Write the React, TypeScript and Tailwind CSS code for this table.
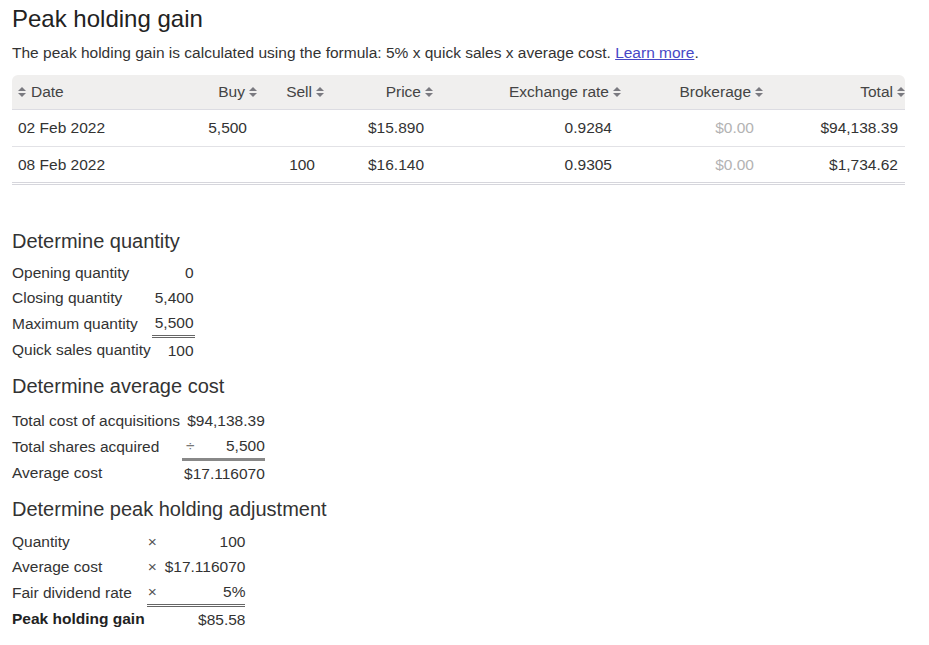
import React from 'react';

const SortIcon = () => (
    <svg width="8" height="12" viewBox="0 0 8 12" className="inline-block shrink-0">
        <path d="M0 5 L4 1 L8 5 Z" fill="#7a7a80" />
        <path d="M0 7 L4 11 L8 7 Z" fill="#7a7a80" />
    </svg>
);

const cols = 'grid grid-cols-[176px_69px_67px_109px_188px_142px_142px]';

const headers = ['Buy', 'Sell', 'Price', 'Exchange rate', 'Brokerage', 'Total'];

const rows = [
    { date: '02 Feb 2022', buy: '5,500', sell: '', price: '$15.890', rate: '0.9284', brokerage: '$0.00', total: '$94,138.39' },
    { date: '08 Feb 2022', buy: '', sell: '100', price: '$16.140', rate: '0.9305', brokerage: '$0.00', total: '$1,734.62' },
];

export default function App() {
    return (
        <div className="min-h-screen bg-white px-3 text-[15.5px] text-[#333] font-['Liberation_Sans',Arial,sans-serif]">
            <h1 className="pt-[4px] text-[24px] leading-[30px] text-[#222]">Peak holding gain</h1>
            <p className="mt-[9px] leading-[20px] text-[#333]">
                The peak holding gain is calculated using the formula: 5% x quick sales x average cost.{' '}
                <a href="#" className="text-[#4747c6] underline">Learn more</a>.
            </p>

            {/* trades table */}
            <div className="mt-[12px] w-[893px]">
                <div className={`${cols} h-[35px] items-center rounded-t-[6px] border-b border-[#dcdce2] bg-[#f0efee] text-[#444]`}>
                    <div className="flex items-center gap-[5px] pl-[6px]">
                        <SortIcon />
                        <span>Date</span>
                    </div>
                    {headers.map((h) => (
                        <div key={h} className="flex items-center justify-end gap-[4px]">
                            <span>{h}</span>
                            <SortIcon />
                        </div>
                    ))}
                </div>
                {rows.map((r, i) => (
                    <div
                        key={r.date}
                        className={`${cols} items-center ${i === rows.length - 1 ? 'h-[38px] border-b-[3px] border-double border-[#d6d6dc]' : 'h-[37px] border-b border-[#e2e2e6]'}`}
                    >
                        <div className="pl-[6px]">{r.date}</div>
                        <div className="pr-[10px] text-right">{r.buy}</div>
                        <div className="pr-[9px] text-right">{r.sell}</div>
                        <div className="pr-[9px] text-right">{r.price}</div>
                        <div className="pr-[9px] text-right">{r.rate}</div>
                        <div className="pr-[9px] text-right text-[#b3b3b3]">{r.brokerage}</div>
                        <div className="pr-[7px] text-right">{r.total}</div>
                    </div>
                ))}
            </div>

            {/* quantity */}
            <h2 className="mt-[44px] text-[20px] leading-[24px]">Determine quantity</h2>
            <table className="mt-[7px] leading-[25px]">
                <tbody>
                    <tr>
                        <td className="pr-[1px]">Opening quantity</td>
                        <td className="pl-[3px] pr-[1px] text-right">0</td>
                    </tr>
                    <tr>
                        <td className="pr-[1px]">Closing quantity</td>
                        <td className="pl-[3px] pr-[1px] text-right">5,400</td>
                    </tr>
                    <tr>
                        <td className="pr-[1px]">Maximum quantity</td>
                        <td className="border-b-[3px] border-double border-[#666] pl-[3px] pr-[1px] text-right">5,500</td>
                    </tr>
                    <tr>
                        <td className="pr-[1px]">Quick sales quantity</td>
                        <td className="pl-[3px] pr-[1px] text-right">100</td>
                    </tr>
                </tbody>
            </table>

            {/* average cost */}
            <h2 className="mt-[11px] text-[20px] leading-[24px]">Determine average cost</h2>
            <table className="mt-[10px] leading-[25px]">
                <tbody>
                    <tr>
                        <td className="pr-[2px]">Total cost of acquisitions</td>
                        <td className="pl-[4px] text-right">$94,138.39</td>
                    </tr>
                    <tr>
                        <td className="pr-[2px]">Total shares acquired</td>
                        <td className="border-b-[3px] border-[#888] pl-[2px]">
                            <div className="flex justify-between">
                                <span className="pl-[2px] text-[#777]">÷</span>
                                <span>5,500</span>
                            </div>
                        </td>
                    </tr>
                    <tr>
                        <td className="pr-[2px]">Average cost</td>
                        <td className="pl-[2px] text-right">$17.116070</td>
                    </tr>
                </tbody>
            </table>

            {/* peak holding adjustment */}
            <h2 className="mt-[11px] text-[20px] leading-[24px]">Determine peak holding adjustment</h2>
            <table className="mt-[8px] leading-[25px]">
                <tbody>
                    <tr>
                        <td className="pr-[2px]">Quantity</td>
                        <td className="pl-[1px] pr-[8px] text-[#555]">×</td>
                        <td className="text-right">100</td>
                    </tr>
                    <tr>
                        <td className="pr-[2px]">Average cost</td>
                        <td className="pl-[1px] pr-[8px] text-[#555]">×</td>
                        <td className="text-right">$17.116070</td>
                    </tr>
                    <tr>
                        <td className="pr-[2px]">Fair dividend rate</td>
                        <td className="border-b-[3px] border-double border-[#666] pl-[1px] pr-[8px] text-[#555]">×</td>
                        <td className="border-b-[3px] border-double border-[#666] text-right">5%</td>
                    </tr>
                    <tr>
                        <td className="pr-[2px] font-bold text-[#222]">Peak holding gain</td>
                        <td></td>
                        <td className="text-right">$85.58</td>
                    </tr>
                </tbody>
            </table>
        </div>
    );
}
